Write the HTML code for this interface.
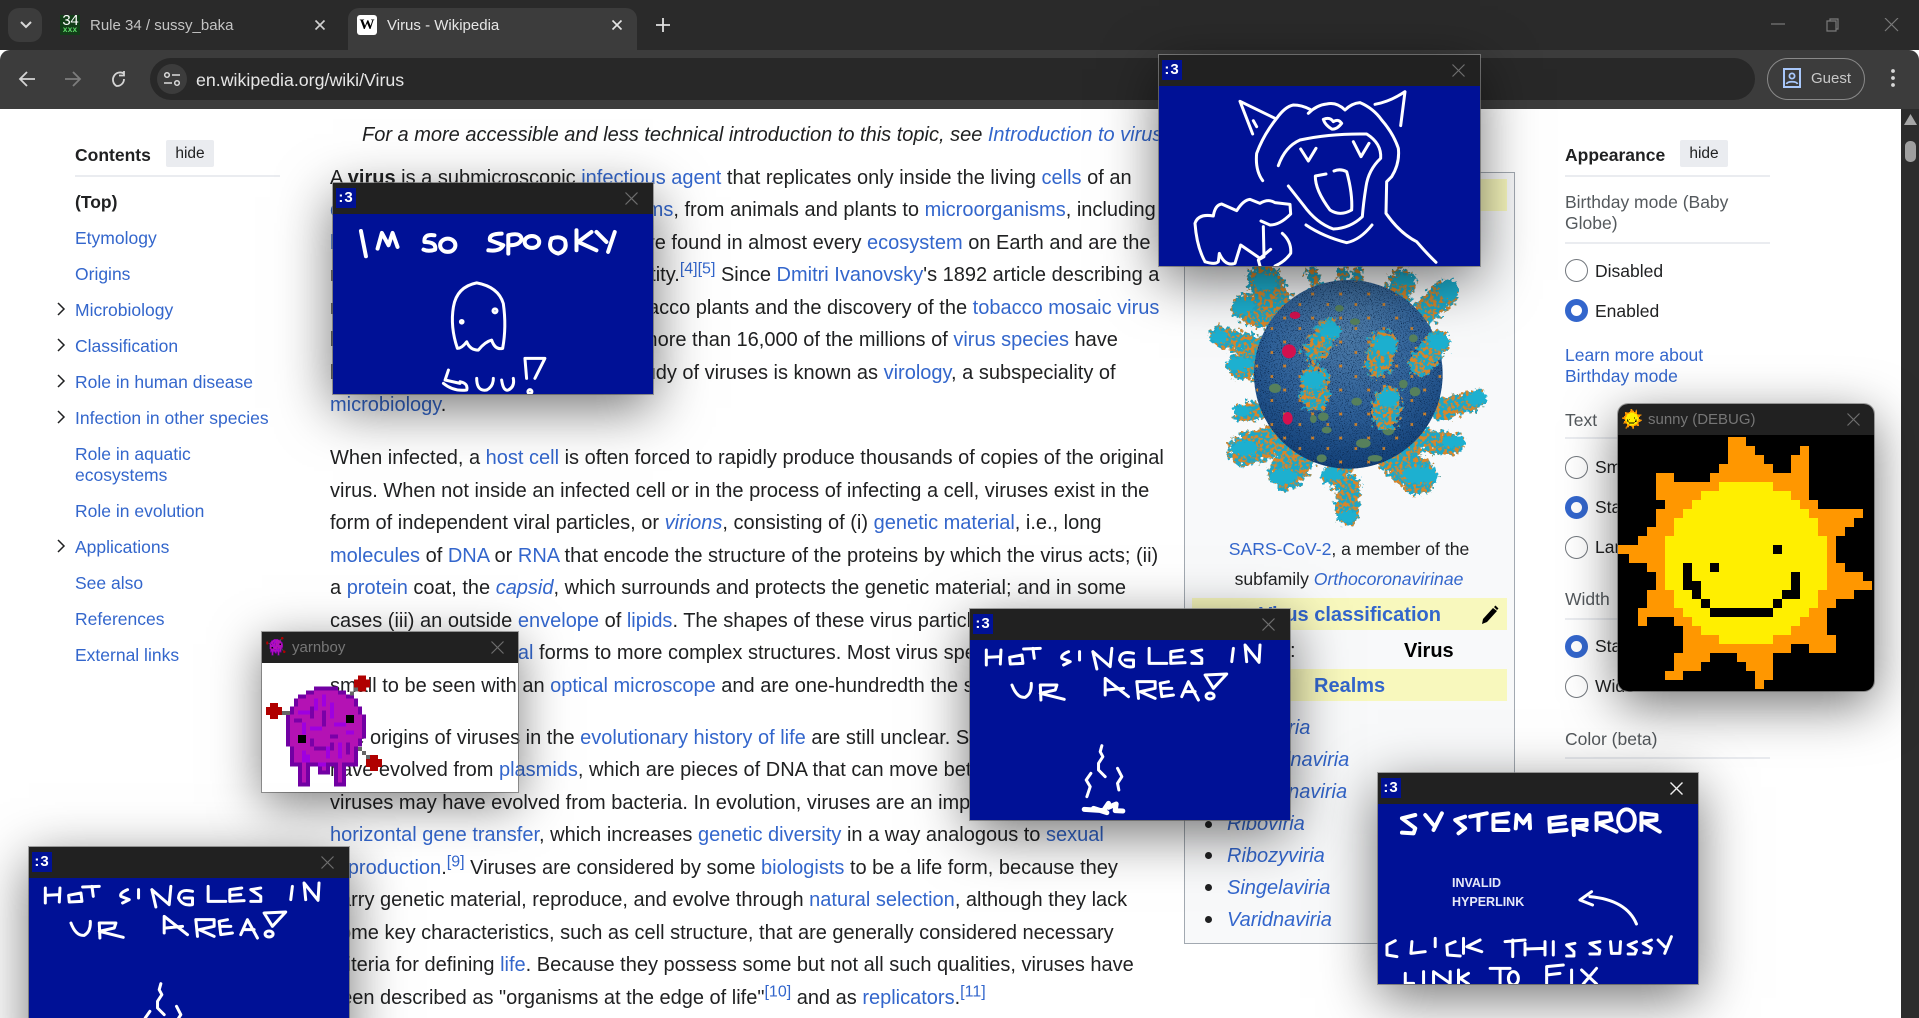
<!DOCTYPE html>
<html><head><meta charset="utf-8"><title>Virus - Wikipedia</title>
<style>
html,body{margin:0;padding:0;background:#fff;width:1919px;height:1018px;overflow:hidden}
#pg{position:absolute;left:0;top:0;width:1919px;height:1018px;overflow:hidden;font-family:"Liberation Sans",Arial,sans-serif;color:#202122;background:#fff}
a{color:#36c;text-decoration:none}
.t{position:absolute;white-space:nowrap}
.p{position:absolute;left:330px;margin:0;font-size:20px;line-height:32.5px;white-space:nowrap}
.sp{display:inline-block}
sup{font-size:16px;line-height:0;vertical-align:super}
.s{position:absolute;white-space:nowrap;font-size:17.5px;line-height:22px}
.g{color:#54595d}
.hide{position:absolute;width:48px;height:27px;top:140px;background:#eaecf0;border-radius:2px;font-size:15.5px;line-height:28px;text-align:center;color:#202122}
.hr{position:absolute;height:2px;background:#eaecf0}
.r{position:absolute;left:1565px;width:23px;height:23px;box-sizing:border-box;border-radius:50%;border:1px solid #72777d;background:#fff}
.r.on{border:6.5px solid #36c}
.ch{position:absolute;left:56px;width:10px;height:14px}
.w{position:absolute;width:320px;box-sizing:border-box;box-shadow:0 14px 52px rgba(0,0,0,.55),0 0 0 1px rgba(150,150,150,.75)}
.w .b{position:absolute;left:0;top:31px;width:100%;background:#001196;overflow:hidden}
.w .h{position:absolute;left:0;top:0;width:100%;height:31px;background:#212121}
.w .l{position:absolute;left:3px;top:5px;width:20px;height:20px;background:#001196;color:#fff;font:bold 15px/20px "Liberation Sans",sans-serif;text-align:center;letter-spacing:1px}
.w .x{position:absolute;right:15px;top:9px;width:13px;height:13px}
.w .n{position:absolute;left:30px;top:6px;font-size:15px;line-height:20px;color:#767676;white-space:nowrap}
.w svg.sc{display:block;width:100%;height:180px}
.sc path,.sc ellipse,#hot path,#hot ellipse{fill:none;stroke:#fff;stroke-width:3px;vector-effect:non-scaling-stroke;stroke-linecap:round;stroke-linejoin:round}
.ib{position:absolute;left:1184px;top:172px;width:331px;height:772px;box-sizing:border-box;border:1px solid #a2a9b1;background:#f8f9fa}
.band{position:absolute;left:1192px;width:315px;height:32px;background:#f8f8bd}
.li{position:absolute;left:1227px;font-size:20px;line-height:26px;font-style:italic;white-space:nowrap}
.bu{position:absolute;left:1205px;width:7px;height:7px;border-radius:50%;background:#202122}
</style></head><body><div id="pg">

<!-- article -->
<div class="t" style="left:362px;top:119px;font-size:20px;line-height:32px;font-style:italic">For a more accessible and less technical introduction to this topic, see <a href="#">Introduction to viruses</a>.</div>

<p class="p" style="top:161.5px">A <b>virus</b> is a submicroscopic <a href="#">infectious agent</a> that replicates only inside the living <a href="#">cells</a> of an<br>
<a href="#">organism</a>. Viruses infect all<span class="sp" style="width:18px"></span> <a href="#">life forms</a>, from animals and plants to <a href="#">microorganisms</a>, including<br>
<a href="#">bacteria</a> and <a href="#">archaea</a>.<span class="sp" style="width:36px"></span> Viruses are found in almost every <a href="#">ecosystem</a> on Earth and are the<br>
most numerous type of biological entity.<sup><a href="#">[4][5]</a></sup> Since <a href="#">Dmitri Ivanovsky</a>'s 1892 article describing a<br>
non-bacterial pathogen infecting tobacco plants and the discovery of the <a href="#">tobacco mosaic virus</a><br>
by <a href="#">Martinus Beijerinck</a> in 1898,<span class="sp" style="width:33px"></span> more than 16,000 of the millions of <a href="#">virus species</a> have<br>
been described in detail.<span class="sp" style="width:37px"></span> The study of viruses is known as <a href="#">virology</a>, a subspeciality of<br>
<a href="#">microbiology</a>.</p>

<p class="p" style="top:442px">When infected, a <a href="#">host cell</a> is often forced to rapidly produce thousands of copies of the original<br>
virus. When not inside an infected cell or in the process of infecting a cell, viruses exist in the<br>
form of independent viral particles, or <a href="#"><i>virions</i></a>, consisting of (i) <a href="#">genetic material</a>, i.e., long<br>
<a href="#">molecules</a> of <a href="#">DNA</a> or <a href="#">RNA</a> that encode the structure of the proteins by which the virus acts; (ii)<br>
a <a href="#">protein</a> coat, the <a href="#"><i>capsid</i></a>, which surrounds and protects the genetic material; and in some<br>
cases (iii) an outside <a href="#">envelope</a> of <a href="#">lipids</a>. The shapes of these virus particles range<br>
<a href="#">helical</a> and <a href="#">icosahedral</a> forms to more complex structures. Most virus species<br>
small to be seen with an <a href="#">optical microscope</a> and are one-hundredth the size of most</p>

<p class="p" style="top:721.5px">The origins of viruses in the <a href="#">evolutionary history of life</a> are still unclear. Some viruses<br>
have evolved from <a href="#">plasmids</a>, which are pieces of DNA that can move between cells<br>
viruses may have evolved from bacteria. In evolution, viruses are an important means of<br>
<a href="#">horizontal gene transfer</a>, which increases <a href="#">genetic diversity</a> in a way analogous to <a href="#">sexual</a><br>
<a href="#">reproduction</a>.<sup><a href="#">[9]</a></sup> Viruses are considered by some <a href="#">biologists</a> to be a life form, because they<br>
carry genetic material, reproduce, and evolve through <a href="#">natural selection</a>, although they lack<br>
some key characteristics, such as cell structure, that are generally considered necessary<br>
criteria for defining <a href="#">life</a>. Because they possess some but not all such qualities, viruses have<br>
been described as "organisms at the edge of life"<sup><a href="#">[10]</a></sup> and as <a href="#">replicators</a>.<sup><a href="#">[11]</a></sup></p>

<!-- left sidebar -->
<div class="s" style="left:75px;top:144px;font-weight:bold">Contents</div>
<div class="hide" style="left:166px">hide</div>
<div class="hr" style="left:75px;top:175px;width:205px"></div>
<div class="s" style="left:75px;top:191px;color:#202122;font-weight:bold">(Top)</div>
<a class="s" style="left:75px;top:227px">Etymology</a>
<a class="s" style="left:75px;top:263px">Origins</a>
<a class="s" style="left:75px;top:299px">Microbiology</a>
<a class="s" style="left:75px;top:335px">Classification</a>
<a class="s" style="left:75px;top:371px">Role in human disease</a>
<a class="s" style="left:75px;top:407px">Infection in other species</a>
<a class="s" style="left:75px;top:443px">Role in aquatic</a>
<a class="s" style="left:75px;top:464px">ecosystems</a>
<a class="s" style="left:75px;top:500px">Role in evolution</a>
<a class="s" style="left:75px;top:536px">Applications</a>
<a class="s" style="left:75px;top:572px">See also</a>
<a class="s" style="left:75px;top:608px">References</a>
<a class="s" style="left:75px;top:644px">External links</a>
<svg class="ch" style="top:302px" viewBox="0 0 10 14"><path d="M2 1l6 6-6 6" fill="none" stroke="#202122" stroke-width="1.5"/></svg>
<svg class="ch" style="top:338px" viewBox="0 0 10 14"><path d="M2 1l6 6-6 6" fill="none" stroke="#202122" stroke-width="1.5"/></svg>
<svg class="ch" style="top:374px" viewBox="0 0 10 14"><path d="M2 1l6 6-6 6" fill="none" stroke="#202122" stroke-width="1.5"/></svg>
<svg class="ch" style="top:410px" viewBox="0 0 10 14"><path d="M2 1l6 6-6 6" fill="none" stroke="#202122" stroke-width="1.5"/></svg>
<svg class="ch" style="top:539px" viewBox="0 0 10 14"><path d="M2 1l6 6-6 6" fill="none" stroke="#202122" stroke-width="1.5"/></svg>

<!-- right sidebar -->
<div class="s" style="left:1565px;top:144px;font-weight:bold">Appearance</div>
<div class="hide" style="left:1680px">hide</div>
<div class="hr" style="left:1565px;top:175px;width:205px"></div>
<div class="s g" style="left:1565px;top:191px">Birthday mode (Baby</div>
<div class="s g" style="left:1565px;top:212px">Globe)</div>
<div class="hr" style="left:1565px;top:242px;width:205px"></div>
<div class="r" style="top:259px"></div><div class="s" style="left:1595px;top:260px">Disabled</div>
<div class="r on" style="top:299px"></div><div class="s" style="left:1595px;top:300px">Enabled</div>
<a class="s" style="left:1565px;top:344px">Learn more about</a>
<a class="s" style="left:1565px;top:365px">Birthday mode</a>
<div class="s g" style="left:1565px;top:409px">Text</div>
<div class="hr" style="left:1565px;top:437px;width:205px"></div>
<div class="r" style="top:456px"></div><div class="s" style="left:1595px;top:456px">Small</div>
<div class="r on" style="top:496px"></div><div class="s" style="left:1595px;top:496px">Standard</div>
<div class="r" style="top:536px"></div><div class="s" style="left:1595px;top:536px">Large</div>
<div class="s g" style="left:1565px;top:588px">Width</div>
<div class="hr" style="left:1565px;top:618px;width:205px"></div>
<div class="r on" style="top:635px"></div><div class="s" style="left:1595px;top:635px">Standard</div>
<div class="r" style="top:675px"></div><div class="s" style="left:1595px;top:675px">Wide</div>
<div class="s g" style="left:1565px;top:728px">Color (beta)</div>
<div class="hr" style="left:1565px;top:757px;width:205px"></div>

<!-- infobox -->
<div class="ib"></div>
<div class="band" style="top:179px"></div>
<svg style="position:absolute;left:1140px;top:240px" width="400" height="320" viewBox="0 0 1200 960">
<defs>
<filter id="spk" x="-15%" y="-15%" width="130%" height="130%" color-interpolation-filters="sRGB">
<feTurbulence type="fractalNoise" baseFrequency="0.07" numOctaves="3" seed="4" result="n"/>
<feDisplacementMap in="SourceGraphic" in2="n" scale="46" xChannelSelector="R" yChannelSelector="G" result="d"/>
<feTurbulence type="fractalNoise" baseFrequency="0.09" numOctaves="3" seed="11"/>
<feColorMatrix values="0 0 0 0 .85 0 0 0 0 .52 0 0 0 0 .16 0 0 0 9 -4.200" result="o"/>
<feComposite in="o" in2="d" operator="in" result="oo"/>
<feMerge><feMergeNode in="d"/><feMergeNode in="oo"/></feMerge>
</filter>
<filter id="hd" x="-15%" y="-15%" width="130%" height="130%" color-interpolation-filters="sRGB">
<feTurbulence type="fractalNoise" baseFrequency="0.1" numOctaves="2" seed="8" result="n"/>
<feDisplacementMap in="SourceGraphic" in2="n" scale="30" xChannelSelector="R" yChannelSelector="G"/>
</filter>
<filter id="tx" x="0" y="0" width="100%" height="100%" color-interpolation-filters="sRGB"><feTurbulence type="fractalNoise" baseFrequency="0.3" numOctaves="2" seed="9"/><feColorMatrix values="0 0 0 0 .03 0 0 0 0 .14 0 0 0 0 .28 0 0 0 5 -2.800"/><feComposite in2="SourceGraphic" operator="in"/></filter>
<radialGradient id="spg" cx=".5" cy=".26" r=".85"><stop offset="0" stop-color="#4f7da9"/><stop offset=".5" stop-color="#2f6199"/><stop offset=".85" stop-color="#14427a"/><stop offset="1" stop-color="#0d3164"/></radialGradient>
<pattern id="op" width="84" height="72" patternUnits="userSpaceOnUse"><path d="M10 14l8 8M18 14l-8 8M56 46l7 7M63 46l-7 7" stroke="#cf8128" stroke-width="4" fill="none"/></pattern>
</defs>
<g filter="url(#spk)" fill="none" stroke="#1ba7c9" stroke-linecap="round">
<path stroke-width="85" d="M425 245L320 205"/><path stroke-width="100" d="M405 185L372 120"/><path stroke-width="62" d="M360 320L238 288"/><path stroke-width="80" d="M420 385L300 378"/><path stroke-width="55" d="M360 510L308 518"/><path stroke-width="95" d="M400 600L312 630"/><path stroke-width="105" d="M490 630L437 700"/><path stroke-width="68" d="M610 660L582 710"/><path stroke-width="72" d="M625 740L622 820"/><path stroke-width="110" d="M740 625L835 712"/><path stroke-width="68" d="M840 600L935 612"/><path stroke-width="62" d="M900 510L1005 480"/><path stroke-width="78" d="M840 230L915 160"/><path stroke-width="78" d="M755 220L785 125"/><path stroke-width="32" d="M530 140L515 95M650 140L655 95M610 140L608 98"/>
</g>
<g filter="url(#hd)" fill="#1db0d0">
<ellipse cx="375" cy="125" rx="38" ry="24"/><ellipse cx="310" cy="200" rx="34" ry="24"/><ellipse cx="238" cy="290" rx="26" ry="20"/><ellipse cx="300" cy="372" rx="38" ry="22"/><ellipse cx="305" cy="512" rx="26" ry="16"/><ellipse cx="315" cy="625" rx="38" ry="24"/><ellipse cx="430" cy="710" rx="42" ry="24"/><ellipse cx="575" cy="702" rx="32" ry="18"/><ellipse cx="622" cy="828" rx="28" ry="18"/><ellipse cx="840" cy="705" rx="56" ry="26"/><ellipse cx="940" cy="605" rx="36" ry="18"/><ellipse cx="1010" cy="475" rx="32" ry="22"/><ellipse cx="925" cy="150" rx="30" ry="32"/><ellipse cx="795" cy="120" rx="34" ry="18"/>
</g>
<circle cx="625" cy="403" r="283" fill="url(#spg)"/>
<circle cx="625" cy="403" r="283" fill="#082a50" filter="url(#tx)"/>
<circle cx="625" cy="403" r="280" fill="url(#op)"/>
<g fill="#56805c">
<ellipse cx="405" cy="445" rx="18" ry="14"/><ellipse cx="650" cy="485" rx="16" ry="12"/><ellipse cx="550" cy="530" rx="16" ry="13"/><ellipse cx="745" cy="570" rx="18" ry="16"/><ellipse cx="670" cy="610" rx="22" ry="14"/><ellipse cx="790" cy="432" rx="13" ry="13"/><ellipse cx="825" cy="455" rx="16" ry="14"/><ellipse cx="598" cy="205" rx="13" ry="10"/><ellipse cx="545" cy="655" rx="15" ry="12"/><ellipse cx="705" cy="655" rx="22" ry="10"/><ellipse cx="820" cy="295" rx="13" ry="12"/><ellipse cx="645" cy="245" rx="15" ry="10"/><ellipse cx="520" cy="537" rx="10" ry="12"/><ellipse cx="560" cy="570" rx="15" ry="10"/></g>
<g filter="url(#spk)" fill="none" stroke="#1ba7c9" stroke-linecap="round">
<path stroke-width="72" d="M525 330L565 270"/><path stroke-width="82" d="M715 370L730 312"/><path stroke-width="76" d="M840 370L890 312"/><path stroke-width="85" d="M525 470L525 420"/><path stroke-width="82" d="M735 530L745 482"/>
</g>
<g filter="url(#hd)" fill="#1db0d0">
<ellipse cx="570" cy="270" rx="32" ry="24"/><ellipse cx="735" cy="315" rx="34" ry="28"/><ellipse cx="895" cy="305" rx="32" ry="26"/><ellipse cx="520" cy="418" rx="36" ry="26"/><ellipse cx="745" cy="475" rx="32" ry="26"/>
</g>
<g fill="#d4114f"><ellipse cx="447" cy="334" rx="21" ry="21"/><ellipse cx="465" cy="226" rx="16" ry="11"/><ellipse cx="443" cy="535" rx="15" ry="19"/></g>
</svg>
<div class="t" style="left:1184px;width:330px;text-align:center;top:536px;font-size:17.6px;line-height:26px"><a href="#">SARS-CoV-2</a>, a member of the</div>
<div class="t" style="left:1184px;width:330px;text-align:center;top:566px;font-size:17.6px;line-height:26px">subfamily <a href="#"><i>Orthocoronavirinae</i></a></div>
<div class="band" style="top:598px"></div>
<a class="t" style="left:1259px;top:602px;font-size:20px;line-height:26px;font-weight:bold">Virus classification</a>
<svg style="position:absolute;left:1481px;top:605px" width="18" height="20" viewBox="0 0 18 20"><path d="M1 19l1-5L12 3l4 3-10 11zM13 2l1.500-1.500 3 3L16 5z" fill="#000"/></svg>
<div class="t" style="left:1290px;top:638px;font-size:20px;line-height:26px">:</div>
<div class="t" style="left:1404px;top:638px;font-size:20px;line-height:26px;font-weight:bold;color:#000">Virus</div>
<div class="band" style="top:669px"></div>
<a class="t" style="left:1314px;top:673px;font-size:20px;line-height:26px;font-weight:bold">Realms</a>
<a class="li" style="top:715px">Adnaviria</a>
<a class="li" style="top:747px">Duplodnaviria</a>
<a class="li" style="top:779px">Monodnaviria</a>
<a class="li" style="top:811px">Riboviria</a>
<a class="li" style="top:843px">Ribozyviria</a>
<a class="li" style="top:875px">Singelaviria</a>
<a class="li" style="top:907px">Varidnaviria</a>
<div class="bu" style="top:721px"></div><div class="bu" style="top:753px"></div><div class="bu" style="top:785px"></div><div class="bu" style="top:821px"></div><div class="bu" style="top:852px"></div><div class="bu" style="top:884px"></div><div class="bu" style="top:916px"></div>

<!-- browser chrome -->
<div style="position:absolute;left:0;top:0;width:1919px;height:50px;background:#2a2a2a"></div>
<div style="position:absolute;left:0;top:50px;width:1919px;height:59px;background:#3c3c3c;border-radius:10px 10px 0 0"></div>
<div style="position:absolute;left:8px;top:8px;width:34px;height:34px;border-radius:11px;background:#3c3c3c"></div>
<svg style="position:absolute;left:19px;top:20px" width="14" height="10" viewBox="0 0 14 10"><path d="M2 2l5 5 5-5" fill="none" stroke="#d8d8d8" stroke-width="2"/></svg>
<div style="position:absolute;left:60px;top:15px;width:20px;height:20px;background:#123d18"></div>
<div class="t" style="left:60px;top:13px;width:20px;text-align:center;font:15px/17px 'Liberation Mono',monospace;color:#fff;letter-spacing:-1px">34</div>
<div class="t" style="left:60px;top:27px;width:20px;text-align:center;font:bold 8px/8px 'Liberation Mono',monospace;color:#5fdc6a">xxx</div>
<div class="t" style="left:90px;top:16px;font-size:15px;line-height:20px;color:#c4c4c4">Rule 34 / sussy_baka</div>
<svg style="position:absolute;left:314px;top:19px" width="12" height="12" viewBox="0 0 12 12"><path d="M1.500 1.500l9 9M10.500 1.500l-9 9" stroke="#d0d0d0" stroke-width="1.600"/></svg>
<div style="position:absolute;left:348px;top:8px;width:289px;height:42px;background:#3c3c3c;border-radius:11px 11px 0 0"></div>
<div class="t" style="left:357px;top:15px;width:20px;height:20px;background:#fff;border-radius:3px;color:#000;font:bold 15px/20px 'Liberation Serif',serif;text-align:center">W</div>
<div class="t" style="left:387px;top:16px;font-size:15px;line-height:20px;color:#e6e6e6">Virus - Wikipedia</div>
<svg style="position:absolute;left:611px;top:19px" width="12" height="12" viewBox="0 0 12 12"><path d="M1.500 1.500l9 9M10.500 1.500l-9 9" stroke="#e6e6e6" stroke-width="1.600"/></svg>
<svg style="position:absolute;left:656px;top:18px" width="14" height="14" viewBox="0 0 14 14"><path d="M7 0v14M0 7h14" stroke="#e0e0e0" stroke-width="1.800"/></svg>
<svg style="position:absolute;left:1771px;top:18px" width="130" height="14" viewBox="0 0 130 14"><path d="M0 6h14" stroke="#7a7a7a" stroke-width="1.200"/><path d="M56 3h9v10h-9zM59 3V1h8v10h-2" fill="none" stroke="#7a7a7a" stroke-width="1.200"/><path d="M114 0l13 13M127 0l-13 13" stroke="#7a7a7a" stroke-width="1.200"/></svg>
<svg style="position:absolute;left:18px;top:70px" width="120" height="18" viewBox="0 0 120 18"><path d="M17 9H3M9 2L2 9l7 7" fill="none" stroke="#d4d4d4" stroke-width="1.800"/><path d="M47 9h14M55 2l7 7-7 7" fill="none" stroke="#7d7d7d" stroke-width="1.800"/><path d="M106 3.500A7 7 0 1 0 98.500 16 7 7 0 0 0 106 9M106 1v4.500h-5" fill="none" stroke="#d4d4d4" stroke-width="1.800"/></svg>
<div style="position:absolute;left:150px;top:58px;width:1605px;height:42px;border-radius:21px;background:#282828"></div>
<div style="position:absolute;left:157px;top:64px;width:30px;height:30px;border-radius:50%;background:#3c3c3c"></div>
<svg style="position:absolute;left:163px;top:71px" width="18" height="16" viewBox="0 0 18 16"><circle cx="4" cy="4" r="2.300" fill="none" stroke="#dcdcdc" stroke-width="1.500"/><path d="M9 4h8M1 12h8" stroke="#dcdcdc" stroke-width="1.500"/><circle cx="14" cy="12" r="2.300" fill="none" stroke="#dcdcdc" stroke-width="1.500"/></svg>
<div class="t" style="left:196px;top:69px;font-size:17.8px;line-height:22px;color:#e6e6e6">en.wikipedia.org/wiki/Virus</div>
<div style="position:absolute;left:1767px;top:58px;width:98px;height:42px;box-sizing:border-box;border:1.500px solid #8a8a8a;border-radius:21px"></div>
<svg style="position:absolute;left:1782px;top:68px" width="20" height="20" viewBox="0 0 20 20"><path d="M2 1h16v18H2z" fill="none" stroke="#a8c7fa" stroke-width="2"/><circle cx="10" cy="8" r="2.600" fill="none" stroke="#a8c7fa" stroke-width="1.800"/><path d="M4.500 16c1-3 10-3 11 0" fill="none" stroke="#a8c7fa" stroke-width="1.800"/></svg>
<div class="t" style="left:1811px;top:69px;font-size:15px;line-height:20px;color:#c8c8c8">Guest</div>
<svg style="position:absolute;left:1891px;top:68px" width="4" height="20" viewBox="0 0 4 20"><circle cx="2" cy="3" r="1.900" fill="#d8d8d8"/><circle cx="2" cy="10" r="1.900" fill="#d8d8d8"/><circle cx="2" cy="17" r="1.900" fill="#d8d8d8"/></svg>
<!-- scrollbar -->
<div style="position:absolute;left:1901px;top:109px;width:18px;height:909px;background:#2c2c2c"></div>
<svg style="position:absolute;left:1904px;top:114px" width="13" height="11" viewBox="0 0 13 11"><path d="M6.500 0L13 11H0z" fill="#a6a6a6"/></svg>
<div style="position:absolute;left:1905px;top:141px;width:11px;height:21px;border-radius:5px;background:#9f9f9f"></div>

<svg width="0" height="0" style="position:absolute">
<defs>
<g id="sun" shape-rendering="crispEdges">
<g fill="#ff9700">
<rect x="12" y="0" width="2" height="1"/><rect x="12" y="1" width="3" height="1"/><rect x="20" y="1" width="1" height="1"/><rect x="12" y="2" width="4" height="1"/><rect x="19" y="2" width="2" height="1"/><rect x="11" y="3" width="6" height="1"/><rect x="19" y="3" width="2" height="1"/><rect x="4" y="4" width="2" height="1"/><rect x="10" y="4" width="11" height="1"/><rect x="4" y="5" width="17" height="1"/><rect x="4" y="6" width="17" height="1"/><rect x="5" y="7" width="17" height="1"/><rect x="4" y="8" width="23" height="1"/><rect x="4" y="9" width="22" height="1"/><rect x="3" y="10" width="22" height="1"/><rect x="2" y="11" width="22" height="1"/><rect x="-.22" y="12" width="24.220" height="1"/><rect x="1" y="13" width="23" height="1"/><rect x="3" y="14" width="22" height="1"/><rect x="4" y="15" width="23" height="1"/><rect x="4" y="16" width="24" height="1"/><rect x="3" y="17" width="23" height="1"/><rect x="3" y="18" width="21" height="1"/><rect x="2" y="19" width="21" height="1"/><rect x="2" y="20" width="1" height="1"/><rect x="6" y="20" width="17" height="1"/><rect x="7" y="21" width="16" height="1"/><rect x="7" y="22" width="17" height="1"/><rect x="7" y="23" width="12" height="1"/><rect x="21" y="23" width="3" height="1"/><rect x="6" y="24" width="4" height="1"/><rect x="13" y="24" width="4" height="1"/><rect x="6" y="25" width="3" height="1"/><rect x="14" y="25" width="3" height="1"/><rect x="5" y="26" width="2" height="1"/><rect x="15" y="26" width="2" height="1"/><rect x="15" y="27" width="1" height="1"/>
</g>
<g fill="#ffef00">
<rect x="11" y="5" width="6" height="1"/><rect x="9" y="6" width="10" height="1"/><rect x="8" y="7" width="12" height="1"/><rect x="7" y="8" width="14" height="1"/><rect x="6" y="9" width="16" height="2"/><rect x="5" y="11" width="18" height="6"/><rect x="6" y="17" width="16" height="2"/><rect x="7" y="19" width="14" height="1"/><rect x="8" y="20" width="12" height="1"/><rect x="9" y="21" width="10" height="1"/><rect x="11" y="22" width="6" height="1"/>
</g>
<g fill="#000">
<rect x="17" y="12" width="1" height="1"/><rect x="10" y="14" width="1" height="1"/><rect x="7" y="14" width="1" height="2"/><rect x="7" y="16" width="2" height="1"/><rect x="8" y="17" width="1" height="1"/><rect x="9" y="18" width="1" height="1"/><rect x="10" y="19" width="7" height="1"/><rect x="17" y="18" width="1" height="1"/><rect x="18" y="17" width="2" height="1"/><rect x="19" y="15" width="1" height="2"/>
</g>
</g>
<g id="yarn" shape-rendering="crispEdges">
<g fill="#7100a3">
<rect x="222" y="200" width="72" height="12"/><rect x="198" y="212" width="120" height="12"/><rect x="174" y="224" width="168" height="12"/><rect x="162" y="236" width="192" height="24"/><rect x="150" y="260" width="216" height="24"/><rect x="138" y="284" width="240" height="72"/><rect x="138" y="356" width="228" height="24"/><rect x="150" y="380" width="204" height="60"/><rect x="174" y="440" width="36" height="60"/><rect x="234" y="440" width="36" height="24"/><rect x="282" y="440" width="36" height="60"/>
</g>
<g fill="#b412b4">
<rect x="222" y="212" width="72" height="12"/><rect x="198" y="224" width="120" height="12"/><rect x="174" y="236" width="168" height="24"/><rect x="162" y="260" width="192" height="24"/><rect x="150" y="284" width="216" height="72"/><rect x="150" y="356" width="204" height="24"/><rect x="162" y="380" width="180" height="48"/><rect x="186" y="428" width="12" height="60"/><rect x="246" y="428" width="12" height="24"/><rect x="294" y="428" width="12" height="60"/>
</g>
<g fill="#9e00e0">
<rect x="222" y="236" width="12" height="36"/><rect x="246" y="224" width="12" height="36"/><rect x="174" y="272" width="36" height="12"/><rect x="270" y="248" width="12" height="48"/><rect x="186" y="308" width="12" height="36"/><rect x="210" y="320" width="36" height="12"/><rect x="282" y="308" width="36" height="12"/><rect x="318" y="332" width="24" height="12"/><rect x="186" y="392" width="12" height="36"/><rect x="198" y="404" width="12" height="24"/><rect x="258" y="380" width="12" height="36"/><rect x="294" y="368" width="12" height="48"/><rect x="234" y="428" width="24" height="12"/>
</g>
<g fill="#7a00a8">
<rect x="210" y="260" width="12" height="36"/><rect x="246" y="272" width="12" height="48"/><rect x="162" y="296" width="24" height="12"/><rect x="222" y="380" width="36" height="12"/><rect x="270" y="344" width="24" height="12"/><rect x="210" y="356" width="12" height="24"/><rect x="270" y="368" width="12" height="24"/><rect x="318" y="368" width="12" height="36"/>
</g>
<rect x="318" y="285" width="24" height="24" fill="#000"/><rect x="174" y="345" width="24" height="24" fill="#000"/>
<g fill="#666"><rect x="330" y="214" width="12" height="12"/><rect x="342" y="202" width="12" height="12"/><rect x="126" y="273" width="24" height="12"/><rect x="354" y="381" width="12" height="12"/><rect x="366" y="393" width="12" height="12"/><rect x="378" y="405" width="12" height="12"/></g>
<g fill="#b00000"><rect x="354" y="166" width="24" height="48"/><rect x="342" y="178" width="48" height="24"/><rect x="90" y="249" width="24" height="48"/><rect x="78" y="261" width="48" height="24"/><rect x="390" y="405" width="24" height="48"/><rect x="378" y="417" width="48" height="24"/></g>
</g>
<g id="hot">
<path d="M78 195L78 150M78 172L120 170M122 150L120 192M148 172L185 165L188 190L150 192ZM190 147L240 145M218 145L222 175M325 155Q300 165 305 175L330 185L310 195M358 155L358 180M410 207L398 155M398 155L450 200L455 145M520 160Q480 150 478 180Q490 205 520 200L520 180L495 180M567 145L567 190L620 190M668 150L632 155L632 190L675 188M635 172L665 170M725 150L695 155L725 175L725 190L695 190M820 145L815 185M860 185L855 135L897 187L900 135"/>
<path d="M155 255Q170 295 195 292Q215 280 213 250M242 300L240 255L290 255L285 270L240 280L312 298M435 285L435 235L505 290M440 270L490 265M535 295L530 245L585 245L585 265L540 275L585 295M625 245L600 250L605 290L640 285M605 265L635 265M665 290L685 245L715 300M675 275L705 275M760 265L735 225L800 222L760 265"/>
<ellipse cx="750" cy="288" rx="12" ry="9"/>
<path d="M425 437L420 455L428 470L415 490L415 510L435 530M392 520L378 540L390 560L380 590M472 505L485 530L472 550L476 570"/>
<path style="stroke-width:5px" d="M372 628L430 632L445 610M400 625L440 638M445 622L468 612L465 632L488 633"/>
</g>
</defs>
</svg>

<!-- spooky -->
<div class="w" style="left:333px;top:183px;height:211px">
<div class="h"><div class="l">:3</div><svg class="x" viewBox="0 0 13 13"><path d="M.5 .5l12 12M12.500 .5l-12 12" stroke="#6e6e6e" stroke-width="1.200"/></svg></div>
<div class="b" style="height:180px"><svg class="sc" viewBox="38 131 962 541" preserveAspectRatio="none">
<path style="stroke-width:4px" d="M122 182L137 258M172 235L185 188L205 225L217 188L232 230M343 195Q310 190 313 215Q350 215 345 238Q325 245 310 238"/>
<ellipse style="stroke-width:4px" cx="383" cy="225" rx="23" ry="20"/>
<path style="stroke-width:4px" d="M545 190Q505 190 510 210L550 225Q540 245 505 240M565 250L565 195Q600 185 605 205Q600 225 570 225"/>
<ellipse style="stroke-width:4px" cx="636" cy="215" rx="22" ry="18"/>
<path style="stroke-width:4px" d="M695 205Q680 240 715 250Q745 240 735 210Q720 195 695 205M770 180L770 240M815 185L775 215L830 240M830 185L860 215M885 185L865 245"/>
<path d="M412 535Q390 470 400 410Q410 350 470 338Q535 350 550 400Q560 470 548 535Q525 540 515 510Q495 515 475 540Q450 540 440 515Q425 535 412 535Z"/>
<ellipse cx="425" cy="455" rx="4" ry="4"/><ellipse cx="525" cy="422" rx="6" ry="6"/>
<path d="M385 600L375 630L420 640M370 640Q400 665 440 660Q445 640 420 635M470 625Q470 665 500 660Q520 650 520 625M545 630Q550 665 565 660Q585 650 580 625M620 625L615 565L675 565L645 625"/>
<ellipse cx="630" cy="665" rx="6" ry="6"/>
</svg></div></div>

<!-- yarnboy -->
<div class="w" style="left:262px;top:632px;width:256px;height:160px;box-shadow:0 12px 46px rgba(0,0,0,.5),0 0 0 1px rgba(150,150,150,.8)">
<div class="h"><div class="n">yarnboy</div><svg class="x" style="right:14px" viewBox="0 0 13 13"><path d="M.5 .5l12 12M12.500 .5l-12 12" stroke="#6e6e6e" stroke-width="1.200"/></svg>
<svg style="position:absolute;left:3px;top:4px" width="22" height="22" viewBox="60 150 390 390"><use href="#yarn"/></svg></div>
</div>
<svg style="position:absolute;left:240px;top:620px" width="300" height="190" viewBox="0 0 900 570"><use href="#yarn"/></svg>

<!-- sunny -->
<div class="w" style="left:1618px;top:404px;width:256px;height:287px;border-radius:10px;overflow:visible">
<div class="h" style="border-radius:10px 10px 0 0"><div class="n">sunny (DEBUG)</div><svg class="x" style="right:14px" viewBox="0 0 13 13"><path d="M.5 .5l12 12M12.500 .5l-12 12" stroke="#6e6e6e" stroke-width="1.200"/></svg>
<svg style="position:absolute;left:4px;top:5px" width="20" height="20" viewBox="0 0 28 28"><use href="#sun"/></svg></div>
<div class="b" style="height:256px;background:#000;border-radius:0 0 10px 10px"><svg style="display:block" width="256" height="256" viewBox="-.22 -.22 28.440 28.440"><use href="#sun"/></svg></div>
</div>

<!-- hot singles -->
<div class="w" style="left:970px;top:609px;height:211px">
<div class="h"><div class="l">:3</div><svg class="x" viewBox="0 0 13 13"><path d="M.5 .5l12 12M12.500 .5l-12 12" stroke="#6e6e6e" stroke-width="1.200"/></svg></div>
<div class="b" style="height:180px"><svg class="sc" viewBox="29 120 961 540" preserveAspectRatio="none"><use href="#hot"/></svg></div></div>

<!-- cat -->
<div class="w" style="left:1159px;top:55px;width:321px;height:211px">
<div class="h"><div class="l">:3</div><svg class="x" viewBox="0 0 13 13"><path d="M.5 .5l12 12M12.500 .5l-12 12" stroke="#6e6e6e" stroke-width="1.200"/></svg></div>
<div class="b" style="height:180px"><svg class="sc" viewBox="-3 78 963 540" preserveAspectRatio="none">
<path d="M278 222L240 124L345 175M280 182L290 200"/>
<path d="M308 362Q285 330 290 280Q310 225 350 175Q375 140 400 135Q425 135 450 148M445 160Q470 135 500 132Q530 125 555 150Q575 130 600 128Q640 145 665 180Q700 220 715 265Q720 310 695 350L680 365L678 460Q720 520 770 545Q800 580 828 607"/>
<path d="M645 133Q690 125 735 95L722 197"/>
<path d="M490 178Q510 170 520 185Q535 175 545 190Q530 210 515 207Q495 195 490 178Z"/>
<path d="M355 317Q375 260 420 240Q510 220 620 222Q665 250 662 295Q625 330 618 380Q610 430 607 470Q570 505 520 507Q470 490 430 435L385 378"/>
<path d="M422 267L445 303L468 265M580 245L603 290L627 250"/>
<path d="M498 342L466 348Q465 390 510 450Q540 470 575 450Q578 400 560 335Q540 325 522 333"/>
<path d="M438 495Q490 530 560 548Q600 540 636 495"/>
<path d="M135 605Q110 560 105 490Q115 460 160 468Q165 435 185 432L230 452Q250 420 270 418L300 430Q325 415 345 428L390 433L392 462Q360 495 330 495L303 483"/>
<path d="M135 605Q165 615 175 605L178 580Q195 620 225 610L242 555L300 595L332 568M310 500L312 590L295 600L300 618M367 520Q395 545 392 580Q375 605 345 618"/>
</svg></div></div>

<!-- system error -->
<div class="w" style="left:1378px;top:773px;height:211px">
<div class="h"><div class="l">:3</div><svg class="x" viewBox="0 0 13 13"><path d="M.5 .5l12 12M12.500 .5l-12 12" stroke="#f0f0f0" stroke-width="1.400"/></svg></div>
<div class="b" style="height:180px"><svg class="sc" viewBox="23 102 962 540" preserveAspectRatio="none">
<path style="stroke-width:4px" d="M135 135L95 145L135 175L130 190L95 188M165 135L190 165M215 130L190 180M285 140L255 150L285 175L265 190M300 140L350 130M325 135L325 180M415 130L370 135L370 180L415 180M372 155L410 155M437 175L440 135L460 160L478 135L480 175M585 140L538 145L540 185L590 180M540 165L585 160M612 195L610 150L650 150L650 165L615 170L650 180M680 180L680 130L720 130L725 150L685 160L740 185M815 180L815 130L860 135L860 150L820 155L870 185"/>
<ellipse style="stroke-width:4px" cx="770" cy="150" rx="25" ry="32"/>
<path d="M800 462Q770 390 660 380M665 365L630 390L668 405"/>
<path d="M75 512L50 525L50 555L80 560M125 515L122 550L165 545M195 505L195 530M255 515L230 525L232 555L270 558M280 505L280 550M330 510L290 530L335 545M405 515L465 510M428 510L428 560M465 520L465 555M465 537L525 535M525 515L525 555M550 515L550 555M615 520L590 525L612 545L612 558L590 558M690 515L660 520L690 540L688 552L660 552M722 515L725 550L750 550L752 515M800 515L775 525L800 540L795 552L775 552M845 510L820 520L845 535L840 550L822 548M865 510L885 530M905 500L885 550"/>
<path d="M105 610L105 640L130 640M160 605L160 642M190 640L190 605L240 640L240 605M265 600L265 642M295 610L270 625L295 642M360 595L420 595M390 595L390 642M530 640L530 590L580 585M530 615L570 610M605 600L605 642M635 600L680 642M680 595L640 642"/>
<ellipse cx="430" cy="625" rx="15" ry="20"/>
</svg>
<div class="t" style="left:74px;top:70px;font-size:12.500px;line-height:19px;font-weight:bold;color:#e6e8f8">INVALID<br>HYPERLINK</div>
</div></div>

<!-- bottom hot singles -->
<div class="w" style="left:29px;top:847px;height:211px">
<div class="h"><div class="l">:3</div><svg class="x" viewBox="0 0 13 13"><path d="M.5 .5l12 12M12.500 .5l-12 12" stroke="#6e6e6e" stroke-width="1.200"/></svg></div>
<div class="b" style="height:180px"><svg class="sc" viewBox="29 120 961 540" preserveAspectRatio="none"><use href="#hot"/></svg></div></div>

</div></body></html>
